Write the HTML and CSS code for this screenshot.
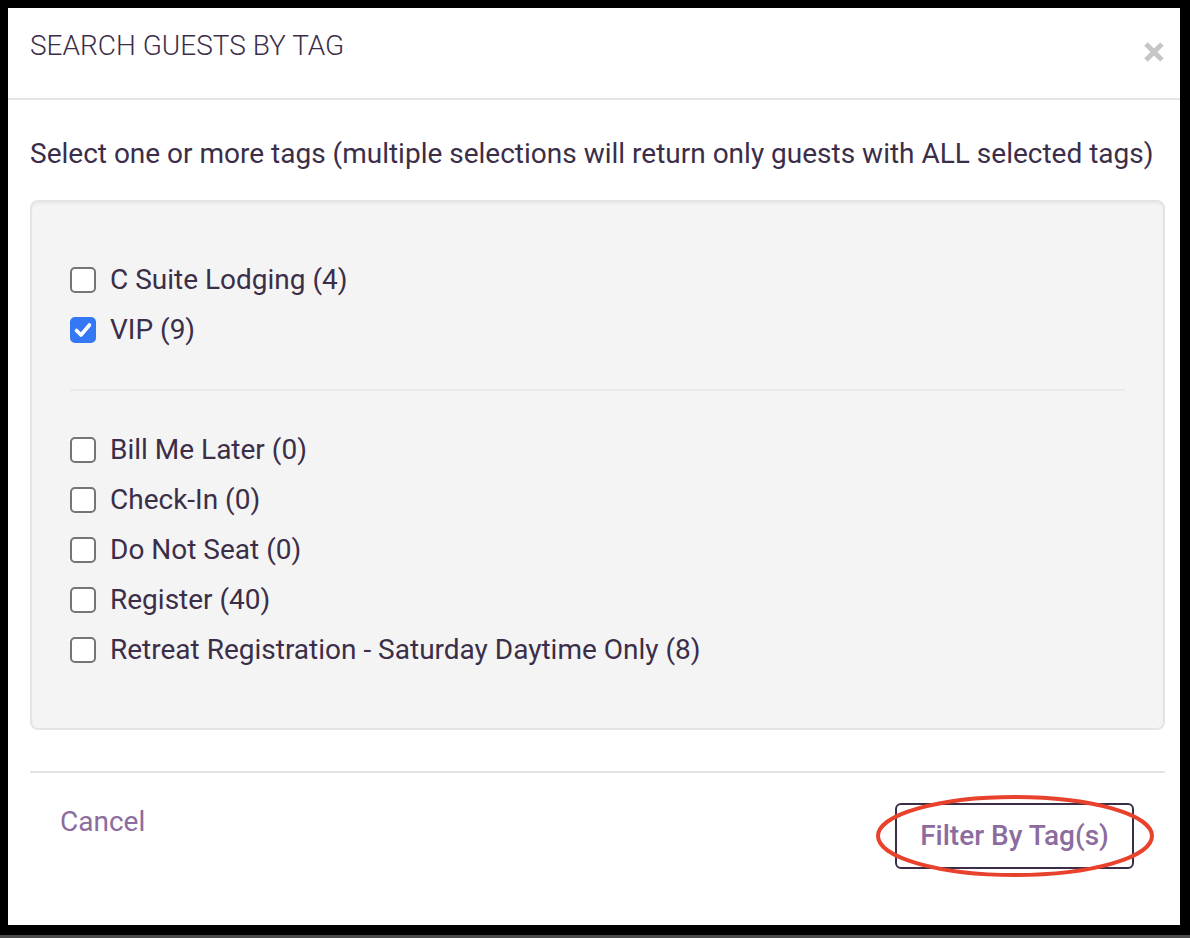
FILE: index.html
```html
<!DOCTYPE html>
<html lang="en">
<head>
<meta charset="utf-8">
<title>Search Guests By Tag</title>
<link rel="stylesheet" href="styles.css">
</head>
<body>
<div class="page">
  <div class="modal">
    <div class="modal-header">
      <h4 class="modal-title">SEARCH GUESTS BY TAG</h4>
      <button class="close" type="button" aria-label="Close">
        <svg width="22" height="22" viewBox="0 0 22 22"><path d="M3 3 L19 19 M19 3 L3 19" stroke="#c6c6c6" stroke-width="5" stroke-linecap="butt"/></svg>
      </button>
    </div>
    <div class="modal-body">
      <p class="intro">Select one or more tags (multiple selections will return only guests with ALL selected tags)</p>
      <div class="well">
        <div class="group group-first">
          <label class="check"><span class="box"></span><span>C Suite Lodging (4)</span></label>
          <label class="check"><span class="box checked"><svg width="26" height="26" viewBox="0 0 26 26"><path d="M6.5 13.5 L11 18 L19.5 8" fill="none" stroke="#fff" stroke-width="3.6" stroke-linecap="round" stroke-linejoin="round"/></svg></span><span>VIP (9)</span></label>
        </div>
        <hr class="sep">
        <div class="group group-last">
          <label class="check"><span class="box"></span><span>Bill Me Later (0)</span></label>
          <label class="check"><span class="box"></span><span>Check-In (0)</span></label>
          <label class="check"><span class="box"></span><span>Do Not Seat (0)</span></label>
          <label class="check"><span class="box"></span><span>Register (40)</span></label>
          <label class="check"><span class="box"></span><span>Retreat Registration - Saturday Daytime Only (8)</span></label>
        </div>
      </div>
      <div class="modal-footer">
        <a class="btn-cancel" href="#">Cancel</a>
        <button class="btn-filter" type="button">Filter By Tag(s)</button>
        <svg class="annotation" width="290" height="92" viewBox="0 0 290 92"><ellipse cx="145" cy="46" rx="137" ry="39" fill="none" stroke="#e8412c" stroke-width="4"/></svg>
      </div>
    </div>
  </div>
  <div class="bottom-edge"></div>
</div>
</body>
</html>
```
FILE: styles.css
```css
html, body {
  margin: 0;
  padding: 0;
  background: #000;
}
body {
  width: 1190px;
  height: 938px;
  overflow: hidden;
  font-family: Roboto, "Liberation Sans", Arial, sans-serif;
  color: #3b2e49;
}
.page {
  display: flex;
  flex-direction: column;
  padding: 8px 10px 0 8px;
  height: 938px;
  box-sizing: border-box;
}
.modal {
  background: #fff;
  width: 1172px;
  height: 917px;
  display: flex;
  flex-direction: column;
}
.bottom-edge {
  margin: 10px -10px 0 -8px;
  height: 3px;
  background: #4b4b4b;
}
.modal-header {
  display: flex;
  align-items: flex-start;
  justify-content: space-between;
  padding: 18px 15px 32px 22px;
  border-bottom: 2px solid #e5e5e5;
}
.modal-title {
  margin: 0;
  font-size: 28px;
  font-weight: 300;
  line-height: 40px;
  color: #3b2e49;
}
.close {
  border: 0;
  background: none;
  padding: 0;
  margin-top: 15px;
  width: 22px;
  height: 22px;
  cursor: pointer;
}
.close svg { display: block; }
.modal-body {
  padding: 34px 15px 0 22px;
  display: flex;
  flex-direction: column;
}
.intro {
  margin: 0 0 26px 0;
  font-size: 28px;
  line-height: 40px;
}
.well {
  background: #f4f4f4;
  border: 2px solid #e4e4e4;
  border-radius: 8px;
  box-shadow: inset 0 2px 2px rgba(0,0,0,0.04);
  padding: 38px;
  margin-bottom: 41px;
}
.group {
  display: flex;
  flex-direction: column;
  gap: 10px;
}
.group-first { padding-top: 20px; }
.group-last { padding-bottom: 20px; }
.sep {
  border: 0;
  height: 2px;
  background: #eaeaea;
  margin: 39px 0;
}
.check {
  display: flex;
  align-items: center;
  gap: 14px;
  font-size: 28px;
  line-height: 40px;
  height: 40px;
  cursor: pointer;
}
.box {
  width: 26px;
  height: 26px;
  box-sizing: border-box;
  border: 2px solid #757575;
  border-radius: 5px;
  background: #fff;
  flex: none;
  position: relative;
}
.box.checked {
  background: #3478f6;
  border-color: #3478f6;
}
.box.checked svg {
  position: absolute;
  left: -2px;
  top: -2px;
}
.modal-footer {
  position: relative;
  border-top: 2px solid #e5e5e5;
  padding: 30px 31px 0 30px;
  display: flex;
  justify-content: space-between;
  align-items: flex-start;
}
.btn-cancel {
  font-size: 28px;
  line-height: 40px;
  color: #8c6c9e;
  text-decoration: none;
  margin-top: -1px;
}
.btn-filter {
  font-family: inherit;
  font-size: 28px;
  font-weight: 500;
  line-height: 40px;
  color: #8c6c9e;
  background: #fff;
  border: 2px solid #3b2e49;
  border-radius: 6px;
  padding: 11px 0;
  width: 239px;
  text-align: center;
  cursor: pointer;
}
.annotation {
  position: absolute;
  right: 5px;
  top: 17px;
  pointer-events: none;
}
```
